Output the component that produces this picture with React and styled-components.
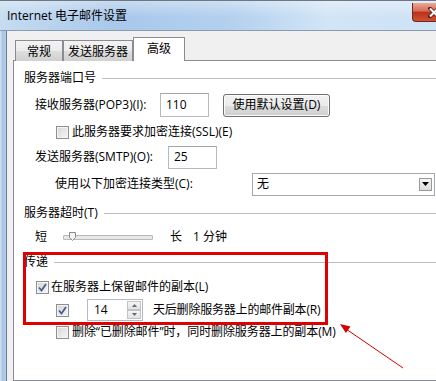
import React from "react";
import styled, { createGlobalStyle } from "styled-components";

const GlobalStyle = createGlobalStyle`
  html, body { margin: 0; padding: 0; background: #fff; overflow: hidden; }
  #root { width: 436px; height: 381px; overflow: hidden; }
`;

const Window = styled.div`
  position: relative;
  width: 456px;
  height: 381px;
  display: flex;
  flex-direction: column;
  font-family: "Open Sans", "Noto Sans CJK SC", sans-serif;
  font-size: 12px;
  line-height: 16px;
  color: #000;
`;

const TitleBar = styled.div`
  box-sizing: border-box;
  height: 31px;
  display: flex;
  align-items: flex-start;
  border-top: 1px solid #6f7782;
  border-bottom: 1px solid #8b9cb0;
  background:
    linear-gradient(180deg, rgba(255, 255, 255, 0.35), rgba(255, 255, 255, 0) 55%),
    linear-gradient(90deg, #c6dcf1 0%, #a9c8ea 25%, #b3d0ee 50%, #d2e5f7 72%, #cde2f6 100%);
`;

const Title = styled.span`
  margin: 7px 0 0 7px;
  white-space: nowrap;
`;

const CloseButton = styled.div`
  box-sizing: border-box;
  margin: 2px 0 0 auto;
  width: 44px;
  height: 19px;
  display: flex;
  align-items: center;
  justify-content: center;
  border: 1px solid #6b2a1e;
  border-top: none;
  border-radius: 0 0 4px 4px;
  background: linear-gradient(180deg, #e9a996 0%, #d86a55 45%, #bb321c 52%, #cf5136 100%);
`;

const Frame = styled.div`
  flex: 1;
  display: flex;
`;

const SideBorder = styled.div`
  width: 6px;
  border-right: 1px solid #6c7c8f;
  background: linear-gradient(90deg, #d8e6f4 0%, #a9c5e5 40%, #b5cee9 100%);
`;

const Body = styled.div`
  flex: 1;
  display: flex;
  flex-direction: column;
  background: #f0f0f0;
  padding: 6px 0 0 6px;
`;

const TabList = styled.div`
  height: 24px;
  display: flex;
  align-items: flex-end;
  padding-left: 2px;
  margin-bottom: -1px;
`;

const Tab = styled.div`
  box-sizing: border-box;
  width: ${(p) => p.$w}px;
  height: ${(p) => (p.$active ? 24 : 21)}px;
  display: flex;
  align-items: center;
  justify-content: center;
  padding: ${(p) => (p.$active ? "0 0 2px" : "2px 0 0")};
  border: 1px solid #898c95;
  border-bottom: none;
  position: relative;
  z-index: ${(p) => (p.$active ? 1 : 0)};
  background: ${(p) =>
    p.$active
      ? "#fff"
      : "linear-gradient(180deg, #f3f3f3 0%, #ebebeb 50%, #dedede 51%, #d0d0d0 100%)"};
`;

const Panel = styled.div`
  flex: 1;
  display: flex;
  flex-direction: column;
  background: #fff;
  border: 1px solid #898c95;
  border-right: none;
  padding: 8px 0 0 10px;
`;

const GroupHeader = styled.div`
  height: 18px;
  display: flex;
  align-items: center;
  margin-top: ${(p) => p.$mt || 0}px;
  white-space: nowrap;

  &::after {
    content: "";
    flex: 1;
    height: 1px;
    margin-left: 6px;
    background: #bdbdbd;
  }
`;

const Row = styled.div`
  height: ${(p) => p.$h}px;
  display: flex;
  align-items: center;
  margin-top: ${(p) => p.$mt}px;
  padding-left: ${(p) => p.$indent}px;
  white-space: nowrap;
`;

const Label = styled.span`
  width: ${(p) => (p.$w ? `${p.$w}px` : "auto")};
  flex: none;
  margin-left: ${(p) => p.$ml || 0}px;
  letter-spacing: ${(p) => p.$ls || 0}px;
`;

const TextBox = styled.div`
  box-sizing: border-box;
  width: ${(p) => p.$w}px;
  height: ${(p) => p.$h}px;
  display: flex;
  align-items: center;
  padding-left: 5px;
  border: 1px solid #b5b9c0;
  border-top-color: #a0a4ab;
  background: #fff;
`;

const Button = styled.div`
  box-sizing: border-box;
  width: 107px;
  height: 23px;
  margin-left: 14px;
  display: flex;
  align-items: center;
  justify-content: center;
  border: 1px solid #707070;
  border-radius: 3px;
  background: linear-gradient(180deg, #f2f2f2 0%, #ebebeb 50%, #dddddd 51%, #cfcfcf 100%);
  box-shadow: inset 0 0 0 1px #fbfbfb;
`;

const Check = styled.span`
  box-sizing: border-box;
  width: 13px;
  height: 13px;
  flex: none;
  display: flex;
  align-items: center;
  justify-content: center;
  border: 1px solid #8e8f8f;
  background: linear-gradient(135deg, #d6d6d6 0%, #f6f6f6 100%);
  box-shadow: inset 0 0 0 1px #f4f4f4;
`;

const Select = styled.div`
  box-sizing: border-box;
  width: 183px;
  height: 23px;
  display: flex;
  align-items: center;
  padding: 0 2px 0 4px;
  border: 1px solid #a5a8ae;
  background: #fff;
`;

const SelectValue = styled.span`
  flex: 1;
`;

const DropButton = styled.span`
  box-sizing: border-box;
  width: 13px;
  height: 13px;
  display: flex;
  align-items: center;
  justify-content: center;
  border: 1px solid #9a9a9a;
  background: linear-gradient(180deg, #f6f6f6, #dcdcdc);
`;

const Slider = styled.div`
  position: relative;
  width: 88px;
  height: 3px;
  margin-left: 16px;
  border: 1px solid #b9b9b9;
  border-radius: 1px;
  background: #e7e7e7;
`;

const Thumb = styled.svg`
  position: absolute;
  left: 5px;
  top: -4px;
`;

const Spinner = styled.div`
  box-sizing: border-box;
  width: 56px;
  height: 22px;
  margin-left: 18px;
  display: flex;
  border: 1px solid #b5b9c0;
  background: #fff;
`;

const SpinValue = styled.span`
  flex: 1;
  display: flex;
  align-items: center;
  padding-left: 6px;
`;

const SpinButtons = styled.div`
  width: 14px;
  display: flex;
  flex-direction: column;
  padding: 1px;
`;

const SpinHalf = styled.span`
  flex: 1;
  display: flex;
  align-items: center;
  justify-content: center;
  border: 1px solid #c3c3c3;
  background: linear-gradient(180deg, #f5f5f5, #e2e2e2);
`;

const Highlight = styled.div`
  position: absolute;
  left: 23px;
  top: 252px;
  width: 305px;
  height: 73px;
  box-sizing: border-box;
  border: 3px solid #e10000;
  pointer-events: none;
`;

const Annotation = styled.svg`
  position: absolute;
  left: 0;
  top: 0;
  pointer-events: none;
`;

const CheckBox = ({ checked }) => (
  <Check>
    {checked && (
      <svg width="9" height="9" viewBox="0 0 9 9">
        <path d="M1 4.5 L3.5 7.5 L8 1" fill="none" stroke="#4a5d8f" strokeWidth="1.8" />
      </svg>
    )}
  </Check>
);

const Triangle = ({ up, color = "#000", w = 7, h = 4 }) => (
  <svg width={w} height={h} viewBox={`0 0 ${w} ${h}`}>
    <polygon
      points={up ? `0,${h} ${w},${h} ${w / 2},0` : `0,0 ${w},0 ${w / 2},${h}`}
      fill={color}
    />
  </svg>
);

export default function App() {
  return (
    <>
      <GlobalStyle />
      <Window>
        <TitleBar>
          <Title>Internet 电子邮件设置</Title>
          <CloseButton>
            <svg width="12" height="11" viewBox="0 0 12 11">
              <path
                d="M2 1.5 L10 9.5 M10 1.5 L2 9.5"
                stroke="#5a1c12"
                strokeWidth="3.6"
                strokeLinecap="square"
              />
              <path d="M2 1.5 L10 9.5 M10 1.5 L2 9.5" stroke="#fff" strokeWidth="2" />
            </svg>
          </CloseButton>
        </TitleBar>
        <Frame>
          <SideBorder />
          <Body>
            <TabList>
              <Tab $w={48}>常规</Tab>
              <Tab $w={70}>发送服务器</Tab>
              <Tab $w={52} $active>
                高级
              </Tab>
            </TabList>
            <Panel>
              <GroupHeader>服务器端口号</GroupHeader>
              <Row $mt={6} $h={24} $indent={11}>
                <Label $w={125}>接收服务器(POP3)(I):</Label>
                <TextBox $w={49} $h={24}>110</TextBox>
                <Button>使用默认设置(D)</Button>
              </Row>
              <Row $mt={3} $h={24} $indent={32}>
                <CheckBox />
                <Label $ml={3}>此服务器要求加密连接(SSL)(E)</Label>
              </Row>
              <Row $mt={1} $h={24} $indent={11}>
                <Label $w={133}>发送服务器(SMTP)(O):</Label>
                <TextBox $w={49} $h={23}>25</TextBox>
              </Row>
              <Row $mt={3} $h={24} $indent={31}>
                <Label $w={197}>使用以下加密连接类型(C):</Label>
                <Select>
                  <SelectValue>无</SelectValue>
                  <DropButton>
                    <Triangle w={7} h={4} />
                  </DropButton>
                </Select>
              </Row>
              <GroupHeader $mt={8}>服务器超时(T)</GroupHeader>
              <Row $mt={5} $h={20} $indent={11}>
                <Label>短</Label>
                <Slider>
                  <Thumb width="7" height="9" viewBox="0 0 7 9">
                    <path d="M0.5 0.5 H6.5 V5.5 L3.5 8.5 L0.5 5.5 Z" fill="#f4f4f4" stroke="#8a8a8a" />
                  </Thumb>
                </Slider>
                <Label $ml={17}>长</Label>
                <Label $ml={11}>1 分钟</Label>
              </Row>
              <GroupHeader $mt={6}>传递</GroupHeader>
              <Row $mt={6} $h={20} $indent={12}>
                <CheckBox checked />
                <Label $ml={2}>在服务器上保留邮件的副本(L)</Label>
              </Row>
              <Row $mt={2} $h={22} $indent={32}>
                <CheckBox checked />
                <Spinner>
                  <SpinValue>14</SpinValue>
                  <SpinButtons>
                    <SpinHalf>
                      <Triangle up w={5} h={3} color="#5a6b80" />
                    </SpinHalf>
                    <SpinHalf>
                      <Triangle w={5} h={3} color="#5a6b80" />
                    </SpinHalf>
                  </SpinButtons>
                </Spinner>
                <Label $ml={10} $ls={-0.2}>天后删除服务器上的邮件副本(R)</Label>
              </Row>
              <Row $mt={1} $h={20} $indent={32}>
                <CheckBox />
                <Label $ml={3} $ls={-0.1}>删除“已删除邮件”时，同时删除服务器上的副本(M)</Label>
              </Row>
            </Panel>
          </Body>
        </Frame>
        <Highlight />
        <Annotation width="436" height="381" viewBox="0 0 436 381">
          <line x1="403" y1="368" x2="346" y2="329" stroke="#d40000" strokeWidth="1" />
          <polygon points="340,324 350.5,326.4 345.9,333" fill="#d40000" />
        </Annotation>
      </Window>
    </>
  );
}
